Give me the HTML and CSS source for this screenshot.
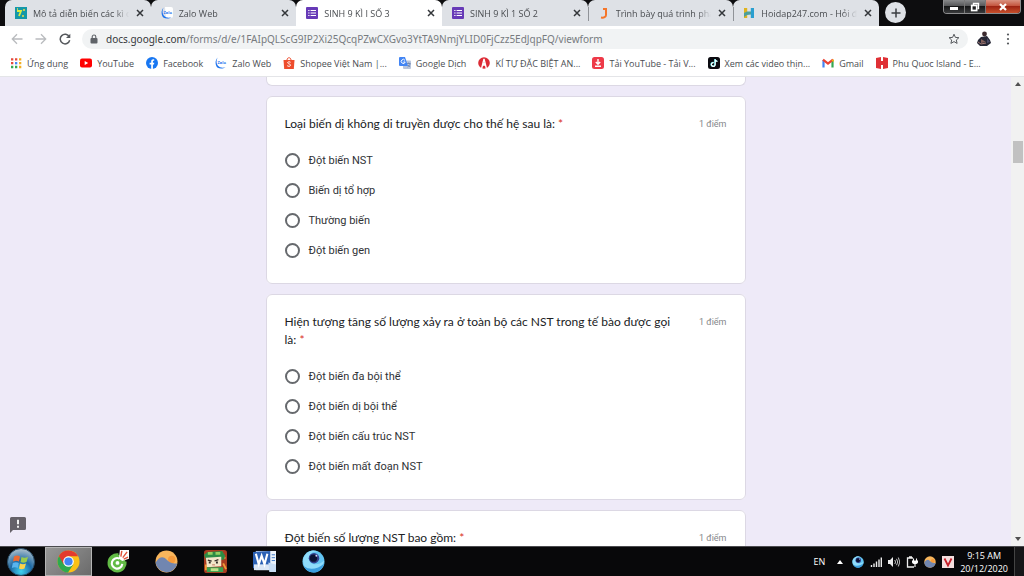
FILE: index.html
```html
<!DOCTYPE html>
<html lang="vi">
<head>
  <meta charset="UTF-8" />
  <meta name="viewport" content="width=device-width, initial-scale=1.0"/>
  <title>SINH 9 KÌ I SỐ 3</title>
  <link rel="stylesheet" href="styles.css">
</head>
<body>
  <!-- shared icons -->
  <svg class="defs" aria-hidden="true">
    <symbol id="i-close" viewBox="0 0 8 8"><path d="M1 1l6 6M7 1L1 7" stroke="#33363a" stroke-width="1.5"/></symbol>
    <symbol id="i-form" viewBox="0 0 12 12"><rect width="12" height="12" rx="1" fill="#673ab7"/><path d="M4.6 3.5H10M4.6 6H10M4.6 8.5H10M2.2 3.5h1.3M2.2 6h1.3M2.2 8.5h1.3" stroke="#fff" stroke-width="1.2"/></symbol>
    <symbol id="i-weather" viewBox="0 0 22 22"><circle cx="11" cy="11" r="10.5" fill="#f9b65c"/><circle cx="16" cy="9" r="3.500" fill="#f59a3c"/><path d="M.6 12C4 6.500 7.500 5.500 11 9c3.500 3.500 6.500 4 10.300 4A10.500 10.500 0 0 1 .6 12z" fill="#7186b0"/></symbol>
    <symbol id="i-orb" viewBox="0 0 24 24"><circle cx="12" cy="12" r="11.5" fill="#62c4f2"/><path d="M1.500 8C5 1 11-1 17 1.600c-6-.6-9.500 2.400-9.500 7.400 0 6.500 9 8.500 15.500 2-1 8-6 11-11.500 11S-.5 17 1.500 8z" fill="#8fdcfb"/><path d="M2 17c6 4.500 15 3 21-3-2 7-7 9.500-11 9.500S4 21 2 17z" fill="#3b9fe0"/><circle cx="12.500" cy="8.500" r="5.500" fill="#33408c"/><circle cx="12" cy="8.500" r="3.800" fill="#0a1234"/><circle cx="15" cy="6" r="1" fill="#d9d3f5"/></symbol>
  </svg>

  <header class="tab-strip">
    <nav class="tabs" aria-label="Tabs">
      <div class="tab">
        <svg class="icon" viewBox="0 0 12 12"><rect width="12" height="12" fill="#1598a8"/><path d="M2 4h4L4 9" fill="none" stroke="#d8ef42" stroke-width="1.8"/><path d="M7 9h2M9 2v2M2 2h1" stroke="#f7dc3e" stroke-width="1.5"/></svg>
        <a class="tab-title" href="#">Mô tả diễn biến các kì của</a>
        <button class="tab-close" aria-label="Đóng"><svg><use href="#i-close"/></svg></button>
      </div>
      <div class="tab">
        <svg class="icon" viewBox="0 0 12 12"><path d="M4 0h6q2 0 2 2v7q0 2-2 2H5z" fill="#fff"/><path d="M2.600.6C-.2 3.400.1 8 2.300 10.400c2.200 1.600 5.800 1.500 8.200-.1C7.600 11 4.600 10.600 3 8.800 1.200 6.600 1.100 3.200 2.600.6z" fill="#1c74ee"/><text x="2.500" y="7" class="zalo-text">Zalo</text></svg>
        <a class="tab-title" href="#">Zalo Web</a>
        <button class="tab-close" aria-label="Đóng"><svg><use href="#i-close"/></svg></button>
      </div>
      <div class="tab active">
        <svg class="icon"><use href="#i-form"/></svg>
        <a class="tab-title" href="#">SINH 9 KÌ I SỐ 3</a>
        <button class="tab-close" aria-label="Đóng"><svg><use href="#i-close"/></svg></button>
      </div>
      <div class="tab">
        <svg class="icon"><use href="#i-form"/></svg>
        <a class="tab-title" href="#">SINH 9 KÌ 1 SỐ 2</a>
        <button class="tab-close" aria-label="Đóng"><svg><use href="#i-close"/></svg></button>
      </div>
      <div class="tab divided">
        <svg class="icon" viewBox="0 0 12 12"><path d="M5 2h3v6c0 2-2 3-5 2.500" fill="none" stroke="#f5762a" stroke-width="2"/></svg>
        <a class="tab-title" href="#">Trình bày quá trình phát</a>
        <button class="tab-close" aria-label="Đóng"><svg><use href="#i-close"/></svg></button>
      </div>
      <div class="tab divided">
        <svg class="icon" viewBox="0 0 12 12"><path d="M1 1h3.200v10H1z" fill="#e0b31e"/><path d="M7.800 1H11v10H7.800z" fill="#2a9fd0"/><path d="M1 6l3-1.500h4V7.500L4 8l-3 2z" fill="#4d9f9a"/></svg>
        <a class="tab-title" href="#">Hoidap247.com - Hỏi đáp</a>
        <button class="tab-close" aria-label="Đóng"><svg><use href="#i-close"/></svg></button>
      </div>
    </nav>
    <button class="new-tab" aria-label="Tab mới"><svg viewBox="0 0 10 10"><path d="M5 0.500v9M0.500 5h9" stroke="#3a3d41" stroke-width="1.5"/></svg></button>
    <div class="window-buttons">
      <button class="win-btn" aria-label="Thu nhỏ"><svg viewBox="0 0 10 10"><rect x="1" y="5" width="8" height="3" fill="#fff"/></svg></button>
      <button class="win-btn" aria-label="Khôi phục"><svg viewBox="0 0 10 10"><path d="M3.500 3V1.500h5v5H7.500" fill="none" stroke="#fff" stroke-width="1.4"/><rect x="1.700" y="3.500" width="5" height="5" fill="none" stroke="#fff" stroke-width="1.7"/></svg></button>
      <button class="win-btn win-close" aria-label="Đóng cửa sổ"><svg viewBox="0 0 10 10"><path d="M2 2l6 6M8 2L2 8" stroke="#fff" stroke-width="2.2"/></svg></button>
    </div>
  </header>

  <div class="toolbar">
    <button class="tool" aria-label="Quay lại"><svg viewBox="0 0 12 12"><path d="M11.500 6H1.500M6 1.300L1.300 6 6 10.700" fill="none" stroke="#b9bbbe" stroke-width="1.3"/></svg></button>
    <button class="tool" aria-label="Tiến"><svg viewBox="0 0 12 12"><path d="M.5 6h10M6 1.300L10.700 6 6 10.700" fill="none" stroke="#b9bbbe" stroke-width="1.3"/></svg></button>
    <button class="tool" aria-label="Tải lại"><svg viewBox="0 0 12 12"><path d="M10.300 3.800A4.800 4.800 0 1 0 10.700 7.300" fill="none" stroke="#55585c" stroke-width="1.5"/><path d="M11.300.7v4.300H7z" fill="#55585c"/></svg></button>
    <div class="address">
      <svg class="lock" viewBox="0 0 8 10"><rect x=".5" y="4" width="7" height="5.5" rx="1" fill="#5f6368"/><path d="M2.200 4.500V2.800a1.800 1.800 0 0 1 3.600 0v1.700" fill="none" stroke="#5f6368" stroke-width="1.1"/></svg>
      <a class="url" href="#"><span class="host">docs.google.com</span>/forms/d/e/1FAIpQLScG9IP2Xi25QcqPZwCXGvo3YtTA9NmjYLID0FjCzz5EdJqpFQ/viewform</a>
      <button class="star" aria-label="Đánh dấu"><svg viewBox="0 0 12 12"><path d="M6 1.200l1.400 3.200 3.500.3-2.600 2.300.8 3.400L6 8.600l-3.100 1.800.8-3.400L1.100 4.700l3.500-.3z" fill="none" stroke="#55585c"/></svg></button>
    </div>
    <button class="tool avatar" aria-label="Tài khoản"><svg viewBox="0 0 16 16"><circle cx="8.500" cy="3" r="2.400" fill="#3b2a2e"/><path d="M5 6l6-1 3 4 1 3-4 3H4l-3-3 1-3z" fill="#262735"/><path d="M5 8l5 3-5 1z" fill="#83605c"/><path d="M11 7l3 4-3 1z" fill="#4b4c68"/><path d="M2 11l3 2 5-1" stroke="#a27a75" fill="none"/></svg></button>
    <button class="tool menu" aria-label="Menu"><svg viewBox="0 0 12 12"><g fill="#55585c"><circle cx="6" cy="1.500" r="1.100"/><circle cx="6" cy="6" r="1.100"/><circle cx="6" cy="10.500" r="1.100"/></g></svg></button>
  </div>

  <nav class="bookmarks" aria-label="Dấu trang">
    <a href="#"><svg class="icon" viewBox="0 0 12 12"><path d="M1 2.300h2.300M1 6.200h2.300M5 2.300h2.300" stroke="#e5493b" stroke-width="2.3"/><path d="M9 2.300h2.300M9 6.200h2.300M9 10h2.300" stroke="#f2ae24" stroke-width="2.3"/><path d="M5 6.200h2.300" stroke="#4285f4" stroke-width="2.3"/><path d="M1 10h2.300M5 10h2.300" stroke="#34a853" stroke-width="2.3"/></svg>Ứng dụng</a>
    <a href="#"><svg class="icon" viewBox="0 0 12 12"><rect y="1.500" width="12" height="9" rx="2" fill="#f00"/><path d="M4.700 4v4L8.200 6z" fill="#fff"/></svg>YouTube</a>
    <a href="#"><svg class="icon" viewBox="0 0 12 12"><circle cx="6" cy="6" r="6" fill="#1877f2"/><path d="M5.200 12V7.600H3.600V5.800h1.600V4.500c0-1.700 1-2.500 3-2.200v1.500c-1.200-.1-1.300.2-1.300.8v1.200h1.400L8 7.600H6.900V12z" fill="#fff"/></svg>Facebook</a>
    <a href="#"><svg class="icon" viewBox="0 0 12 12"><path d="M2.600.6C-.2 3.400.1 8 2.300 10.400c2.200 1.600 5.800 1.500 8.200-.1C7.600 11 4.600 10.600 3 8.800 1.200 6.600 1.100 3.200 2.600.6z" fill="#1c74ee"/><text x="2.500" y="7" class="zalo-text">Zalo</text></svg>Zalo Web</a>
    <a href="#"><svg class="icon" viewBox="0 0 12 12"><path d="M.5 3h11l-.7 9H1.200z" fill="#ee4d2d"/><path d="M4 3c0-3 4-3 4 0" fill="none" stroke="#ee4d2d"/><path d="M7.600 5.300C6.500 4.400 4.400 4.800 4.700 6c.3 1 2.900.7 2.800 2.300-.2 1.300-2.200 1.300-3.300.4" fill="none" stroke="#fff"/></svg>Shopee Việt Nam |...</a>
    <a href="#"><svg class="icon" viewBox="0 0 12 12"><rect x="4" y="3.500" width="8" height="8.500" rx="1" fill="#b8c5dc"/><path d="M0 1q0-1 1-1h5l3 9H1q-1 0-1-1z" fill="#4285f4"/><path d="M6 3.400A2 2 0 1 0 6.200 5H4.400" fill="none" stroke="#fff"/><path d="M8 6.500h3.500M9.700 5.500v1M11 6.500c0 2-1.500 3-2.500 3.500M9 8l2 2" stroke="#5f79a8" stroke-width=".7" fill="none"/></svg>Google Dịch</a>
    <a href="#"><svg class="icon" viewBox="0 0 12 12"><circle cx="6" cy="6" r="5.800" fill="#dc2b35"/><path d="M3.500 12L6 2l2.500 10M6 6v3" fill="none" stroke="#fff" stroke-width="1.4"/></svg>KÍ TỰ ĐẶC BIỆT AN...</a>
    <a href="#"><svg class="icon" viewBox="0 0 12 12"><rect width="12" height="12" rx="2.500" fill="#ee3a49"/><path d="M6 2v5M3.800 5L6 7.300 8.200 5M3 9.300h6" fill="none" stroke="#fff" stroke-width="1.4"/></svg>Tải YouTube - Tải V...</a>
    <a href="#"><svg class="icon" viewBox="0 0 12 12"><rect width="12" height="12" rx="2.500" fill="#0b0b10"/><path d="M5.400 5.500A1.900 1.900 0 1 0 6.900 7.400V2c.2 1.300 1 2 2.300 2.200" fill="none" stroke="#35e5e5" stroke-width="1.5"/><path d="M5.700 5.700A1.900 1.900 0 1 0 7.200 7.600V2.300c.2 1.300 1 2 2.300 2.200" fill="none" stroke="#fff" stroke-width="1.2"/></svg>Xem các video thịn...</a>
    <a href="#"><svg class="icon" viewBox="0 0 12 12"><path d="M1.500 10.500V3" stroke="#4285f4" stroke-width="2.2"/><path d="M10.500 10.500V3" stroke="#34a853" stroke-width="2.2"/><path d="M1 2.600l5 4 5-4" fill="none" stroke="#ea4335" stroke-width="2.3"/><path d="M9.400 3.500L11.600 2v3z" fill="#fbbc04"/></svg>Gmail</a>
    <a href="#"><svg class="icon" viewBox="0 0 12 12"><path d="M0 1l5-1v4h2V0l5 1v10l-5 1V8H5v4l-5-1z" fill="#df3035"/></svg>Phu Quoc Island - E...</a>
  </nav>

  <div class="viewport">
    <main class="page">
      <form class="form">
        <section class="card card-cut"></section>

        <fieldset class="card">
          <div class="question">
            <h2 id="q1">Loại biến dị không di truyền được cho thế hệ sau là: <span class="required">*</span></h2>
            <span class="points">1 điểm</span>
          </div>
          <div class="options" role="radiogroup" aria-labelledby="q1">
            <label><input type="radio" name="q1">Đột biến NST</label>
            <label><input type="radio" name="q1">Biến dị tổ hợp</label>
            <label><input type="radio" name="q1">Thường biến</label>
            <label><input type="radio" name="q1">Đột biến gen</label>
          </div>
        </fieldset>

        <fieldset class="card">
          <div class="question">
            <h2 id="q2">Hiện tượng tăng số lượng xảy ra ở toàn bộ các NST trong tế bào được gọi là: <span class="required">*</span></h2>
            <span class="points">1 điểm</span>
          </div>
          <div class="options" role="radiogroup" aria-labelledby="q2">
            <label><input type="radio" name="q2">Đột biến đa bội thể</label>
            <label><input type="radio" name="q2">Đột biến dị bội thể</label>
            <label><input type="radio" name="q2">Đột biến cấu trúc NST</label>
            <label><input type="radio" name="q2">Đột biến mất đoạn NST</label>
          </div>
        </fieldset>

        <fieldset class="card">
          <div class="question">
            <h2>Đột biến số lượng NST bao gồm: <span class="required">*</span></h2>
            <span class="points">1 điểm</span>
          </div>
        </fieldset>
      </form>
      <button class="report" aria-label="Báo cáo sự cố"><svg viewBox="0 0 16 16"><path d="M1.500 0h13Q16 0 16 1.500v10q0 1.500-1.500 1.500H3l-3 3V1.500Q0 0 1.500 0z" fill="#656169"/><path d="M8 2.800v4.400M8 8.700v2" stroke="#fff" stroke-width="1.8"/></svg></button>
    </main>
    <div class="scrollbar">
      <svg viewBox="0 0 6 4"><path d="M0 4l3-4 3 4z"/></svg>
      <div class="thumb"></div>
      <svg class="down" viewBox="0 0 6 4"><path d="M0 0l3 4 3-4z"/></svg>
    </div>
  </div>

  <footer class="taskbar">
    <button class="start" aria-label="Start"><svg viewBox="0 0 28 28"><defs><radialGradient id="orb" cx=".5" cy=".85" r=".8"><stop offset="0" stop-color="#3fd3f0"/><stop offset=".5" stop-color="#1d6aa5"/><stop offset="1" stop-color="#a3b9c8"/></radialGradient></defs><circle cx="14" cy="14" r="13.5" fill="url(#orb)" stroke="#264c68"/><path d="M7 8.500q3-2 6 0l-1 5q-3-1.500-6 0z" fill="#ee6a32"/><path d="M14.500 9q3 1.500 6.500 0l-1.500 5q-3 1.500-6 0z" fill="#9ccc4b"/><path d="M5.800 15q3-1.500 6 0l-1 5q-3-1.500-6 0z" fill="#59b4ee"/><path d="M13 15.500q3 1.500 6 0l-1.500 5q-3 1.500-5.500 0z" fill="#fbd34b"/></svg></button>
    <div class="apps">
      <button class="app running" aria-label="Chrome"><svg viewBox="0 0 24 24"><circle cx="12" cy="12" r="11.5" fill="#fbc116"/><path d="M2 6.300A11.500 11.500 0 0 0 11.500 23.500L17 15l-5-1z" fill="#2da94f"/><path d="M2 6.300L7 15l3-8.400h12A11.500 11.500 0 0 0 2 6.300z" fill="#e33b2e"/><circle cx="12" cy="12" r="5.500" fill="#fff"/><circle cx="12" cy="12" r="4.300" fill="#4285f4"/></svg></button>
      <button class="app" aria-label="Cốc Cốc"><svg viewBox="0 0 24 24"><path d="M13 3.500A10 10 0 1 0 21.500 12L13 13z" fill="#62bb46"/><circle cx="12" cy="13.500" r="8.500" fill="#62bb46"/><path d="M14 9a5.500 5.500 0 1 0 3 5.500" fill="none" stroke="#fff" stroke-width="2.2"/><circle cx="12" cy="13.500" r="2" fill="#fff"/><path d="M13.500 9l1-9H24v9l-7 2.500z" fill="#fff"/><path d="M15.500 7l1-6M17.500 8l4.500-6M18.500 9.500l4.500-2" stroke="#e2553c" stroke-width="1.5"/></svg></button>
      <button class="app" aria-label="Thời tiết"><svg><use href="#i-weather"/></svg></button>
      <button class="app" aria-label="Mini World"><svg viewBox="0 0 24 24"><rect width="24" height="24" rx="3" fill="#a83b20"/><path d="M18 2l4 7M20 14l3 6M2 15v6" stroke="#ef9b36" stroke-width="2"/><path d="M0 5l4-3 15-1 3 5-1 4-18 2z" fill="#2c8c45"/><path d="M4 2h5v3H4zM12 2h5v3h-5z" fill="#92cf63"/><path d="M2 8l16-1v10L3 18z" fill="#f2e6c9"/><path d="M4 10.500l4 1M11 11.500l4-1.500" stroke="#342c28" stroke-width="1.3"/><path d="M5 13h2M12.500 13h2" stroke="#342c28" stroke-width="2"/><path d="M8.500 15.500h3" stroke="#c7745b"/><path d="M3 18h17v5H3z" fill="#3aa150"/><path d="M7 19h8v3H7z" fill="#bfe08a"/></svg></button>
      <button class="app" aria-label="Word"><svg viewBox="0 0 24 24"><path d="M3 1h21v20H3z" fill="#edf3fa"/><path d="M0 2l18-1v17L0 19z" fill="#2c62b5"/><path d="M1 15h17v6H1z" fill="#dbe7f5"/><path d="M3 4l3 11L9 6l3 9 3-11" fill="none" stroke="#fff" stroke-width="2.2"/><path d="M19.500 5H23M19.500 8H23M19.500 11H23" stroke="#3c77c4"/><path d="M16 13l8 2v8h-7z" fill="#c9ddf4"/></svg></button>
      <button class="app" aria-label="Trình duyệt"><svg><use href="#i-orb"/></svg></button>
    </div>
    <div class="tray">
      <span class="lang">EN</span>
      <svg class="arrow" viewBox="0 0 6 4"><path d="M0 4l3-4 3 4z" fill="#fff"/></svg>
      <svg><use href="#i-orb"/></svg>
      <svg viewBox="0 0 12 12"><path d="M1.500 9v2M4 7.500V11M6.500 5.500V11M9 3.500V11M11.300 1.500V11" stroke="#eee" stroke-width="1.4"/></svg>
      <svg viewBox="0 0 12 12"><path d="M0 4h2l3-3v10L2 8H0z" fill="#eee"/><path d="M6.800 4q1.500 2 0 4M8.500 2.800q2.500 3.200 0 6.400M10.300 1.500q3 4.500 0 9" fill="none" stroke="#ddd" stroke-width=".9"/></svg>
      <svg viewBox="0 0 12 12"><path d="M8 11H1.500V2H7M3 .8h3" fill="none" stroke="#eee" stroke-width="1.3"/><path d="M6 4.500h6v1.500q0 2-3 2T6 6z" fill="#fff"/><path d="M7.500 2.500V5M10.500 2.500V5M9 8v3" stroke="#fff" stroke-width="1.1"/></svg>
      <svg><use href="#i-weather"/></svg>
      <svg viewBox="0 0 12 12"><rect width="12" height="12" fill="#f5dfdf"/><path d="M2.500 2.500L6 9.500l3.500-7" fill="none" stroke="#c8202b" stroke-width="1.8"/></svg>
      <div class="clock"><time>9:15 AM</time><time>20/12/2020</time></div>
      <button class="show-desktop" aria-label="Hiện màn hình nền"></button>
    </div>
  </footer>
</body>
</html>
```
FILE: styles.css
```css
* {
  box-sizing: border-box;
}

body {
  margin: 0;
  height: 100vh;
  display: flex;
  flex-direction: column;
  overflow: hidden;
  font-family: "Open Sans", "Noto Sans", sans-serif;
  font-size: 9px;
  color: #4a4d51;
  background: #fff;
}

button {
  display: flex;
  align-items: center;
  justify-content: center;
  padding: 0;
  border: 0;
  background: none;
}

a {
  color: inherit;
  text-decoration: none;
}

svg {
  display: block;
  flex-shrink: 0;
}

.defs {
  position: absolute;
  width: 0;
  height: 0;
}

.icon {
  width: 12px;
  height: 12px;
}

.zalo-text {
  font-size: 4px;
  font-weight: bold;
  fill: #1c74ee;
}

/* Tabs */
.tab-strip {
  display: flex;
  height: 26px;
  padding: 0 3px 0 5px;
  background: #0d0d0f;
}

.tabs {
  display: flex;
  flex: 0 1 874px;
  min-width: 0;
}

.tab {
  flex: 1;
  min-width: 0;
  display: flex;
  align-items: center;
  gap: 6px;
  padding: 0 6px 0 10px;
  background: #dee1e6;
  border-radius: 7px 7px 0 0;
}

.tab.active {
  background: #fff;
}

.tab.divided {
  background: linear-gradient(#909398, #909398) 0 60% / 1px 14px no-repeat #dee1e6;
}

.tab-title {
  flex: 1;
  min-width: 0;
  overflow: hidden;
  white-space: nowrap;
  -webkit-mask-image: linear-gradient(to right, #000 85%, transparent);
  mask-image: linear-gradient(to right, #000 85%, transparent);
}

.tab-close {
  width: 10px;
  height: 12px;
}

.tab-close svg {
  width: 8px;
  height: 8px;
}

.new-tab {
  width: 21px;
  height: 21px;
  margin: 2px 0 0 6px;
  border-radius: 50%;
  background: #dee1e6;
}

.new-tab svg {
  width: 10px;
  height: 10px;
}

.window-buttons {
  display: flex;
  height: 14px;
  margin-left: auto;
  border: 1px solid #8d8d8f;
  border-top: 0;
  border-radius: 0 0 4px 4px;
  overflow: hidden;
}

.win-btn {
  width: 21px;
  border-right: 1px solid #777;
  background: linear-gradient(#88898b, #565759 45%, #151617 50%, #3a3b3d);
}

.win-btn svg {
  width: 10px;
  height: 10px;
}

.win-close {
  width: 34px;
  border-right: 0;
  background: linear-gradient(#d99180, #c4553e 45%, #9e2413 50%, #c8502c);
}

/* Toolbar */
.toolbar {
  display: flex;
  align-items: center;
  height: 26px;
  padding: 0 8px 0 5px;
}

.tool {
  width: 24px;
  height: 20px;
}

.tool svg {
  width: 12px;
  height: 12px;
}

.avatar {
  width: 32px;
}

.avatar svg {
  width: 16px;
  height: 16px;
}

.menu {
  width: 16px;
}

.address {
  flex: 1;
  min-width: 0;
  display: flex;
  align-items: center;
  gap: 8px;
  height: 20px;
  margin-left: 5px;
  padding: 0 8px;
  border-radius: 10px;
  background: #f1f3f4;
}

.lock {
  width: 8px;
  height: 10px;
}

.url {
  flex: 1;
  min-width: 0;
  overflow: hidden;
  white-space: nowrap;
  font-family: "Noto Sans", sans-serif;
  font-size: 10px;
  color: #777b7f;
}

.host {
  color: #36383b;
}

.star svg {
  width: 12px;
  height: 12px;
}

/* Bookmarks */
.bookmarks {
  display: flex;
  align-items: center;
  gap: 12px;
  height: 25px;
  padding: 0 10px 2px;
  border-bottom: 1px solid #e4e5e8;
  white-space: nowrap;
  overflow: hidden;
}

.bookmarks a {
  display: flex;
  align-items: center;
  gap: 5px;
}

/* Form */
.viewport {
  flex: 1;
  min-height: 0;
  display: flex;
}

.page {
  position: relative;
  flex: 1;
  overflow: hidden;
  background: #eeeaf8;
}

.form {
  display: flex;
  flex-direction: column;
  gap: 10px;
  width: 100%;
  max-width: 480px;
  margin: 0 auto;
}

.card {
  min-width: 0;
  margin: 0;
  padding: 18px;
  border: 1px solid #dcd8e4;
  border-radius: 6px;
  background: #fff;
}

.card-cut {
  padding: 0 0 8px;
  border-top: 0;
  border-radius: 0 0 6px 6px;
}

.question {
  display: flex;
  justify-content: space-between;
  gap: 16px;
  margin-bottom: 12px;
  line-height: 18px;
}

.question h2 {
  margin: 0;
  font-family: Lato, sans-serif;
  font-size: 12px;
  font-weight: 400;
  color: #202124;
}

.required {
  color: #d93025;
}

.points {
  flex-shrink: 0;
  font-family: Roboto, sans-serif;
  color: #85878a;
}

.options label {
  display: flex;
  align-items: center;
  gap: 9px;
  height: 30px;
  font-family: Roboto, sans-serif;
  font-size: 11px;
  color: #303236;
}

.options input {
  appearance: none;
  width: 15px;
  height: 15px;
  margin: 0;
  border: 2px solid #66696d;
  border-radius: 50%;
}

.options input:checked {
  border-width: 5px;
  border-color: #673ab7;
}

.report {
  position: absolute;
  left: 10px;
  bottom: 13px;
}

.report svg {
  width: 16px;
  height: 16px;
}

.scrollbar {
  display: flex;
  flex-direction: column;
  align-items: center;
  width: 13px;
  padding: 5px 0;
  background: #f1f1f1;
}

.scrollbar svg {
  width: 6px;
  height: 4px;
  fill: #505050;
}

.thumb {
  width: 10px;
  height: 22px;
  margin-top: 55px;
  background: #c1c1c1;
}

.scrollbar .down {
  margin-top: auto;
}

/* Taskbar */
.taskbar {
  display: flex;
  height: 30px;
  border-top: 1px solid #4b4b4f;
  background: #08080a;
  color: #fff;
}

.start {
  width: 41px;
}

.start svg {
  width: 28px;
  height: 28px;
}

.apps {
  display: flex;
  gap: 2px;
  padding-left: 4px;
}

.app {
  width: 47px;
  border: 1px solid transparent;
}

.app svg {
  width: 23px;
  height: 23px;
}

.running {
  border-color: #b5b5b5;
  background: linear-gradient(135deg, #979797, #6b6b6b);
}

.tray {
  display: flex;
  align-items: center;
  gap: 6px;
  margin-left: auto;
}

.tray svg {
  width: 12px;
  height: 12px;
}

.lang {
  margin-right: 6px;
}

.tray .arrow {
  width: 6px;
  height: 4px;
  margin-right: 3px;
}

.clock {
  display: flex;
  flex-direction: column;
  align-items: center;
  line-height: 13px;
}

.show-desktop {
  width: 10px;
  height: 100%;
  border-left: 1px solid #444;
  background: #161618;
}
```
